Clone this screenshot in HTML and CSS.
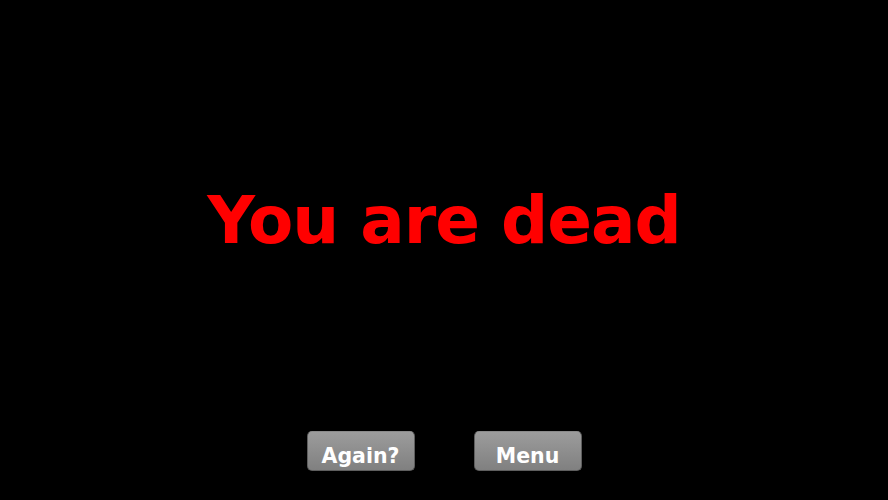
FILE: index.html
```html
<!DOCTYPE html>
<html>
<head>
<meta charset="utf-8">
<link rel="stylesheet" href="styles.css">
</head>
<body>
<div class="screen">
  <h1 class="title">You are dead</h1>
  <div class="actions">
    <button class="btn">Again?</button>
    <button class="btn">Menu</button>
  </div>
</div>
</body>
</html>
```
FILE: styles.css
```css
html, body {
  margin: 0;
  padding: 0;
  background: #000;
}
.screen {
  height: 500px;
  display: flex;
  flex-direction: column;
  align-items: center;
  font-family: "DejaVu Sans", Verdana, sans-serif;
}
.title {
  margin: 181px 0 0 0;
  font-size: 66px;
  line-height: 80px;
  font-weight: bold;
  color: #ff0000;
  letter-spacing: -1px;
}
.actions {
  margin-top: auto;
  margin-bottom: 29px;
  display: flex;
  gap: 59px;
}
.btn {
  width: 108px;
  height: 40px;
  border: 1px solid #5e5e5e;
  border-top-color: #8a8a8a;
  border-radius: 5px;
  background: linear-gradient(#9c9c9c, #808080);
  color: #fff;
  font-family: "DejaVu Sans", Verdana, sans-serif;
  font-weight: bold;
  font-size: 20.5px;
  padding: 10px 0 0 0;
}
```
